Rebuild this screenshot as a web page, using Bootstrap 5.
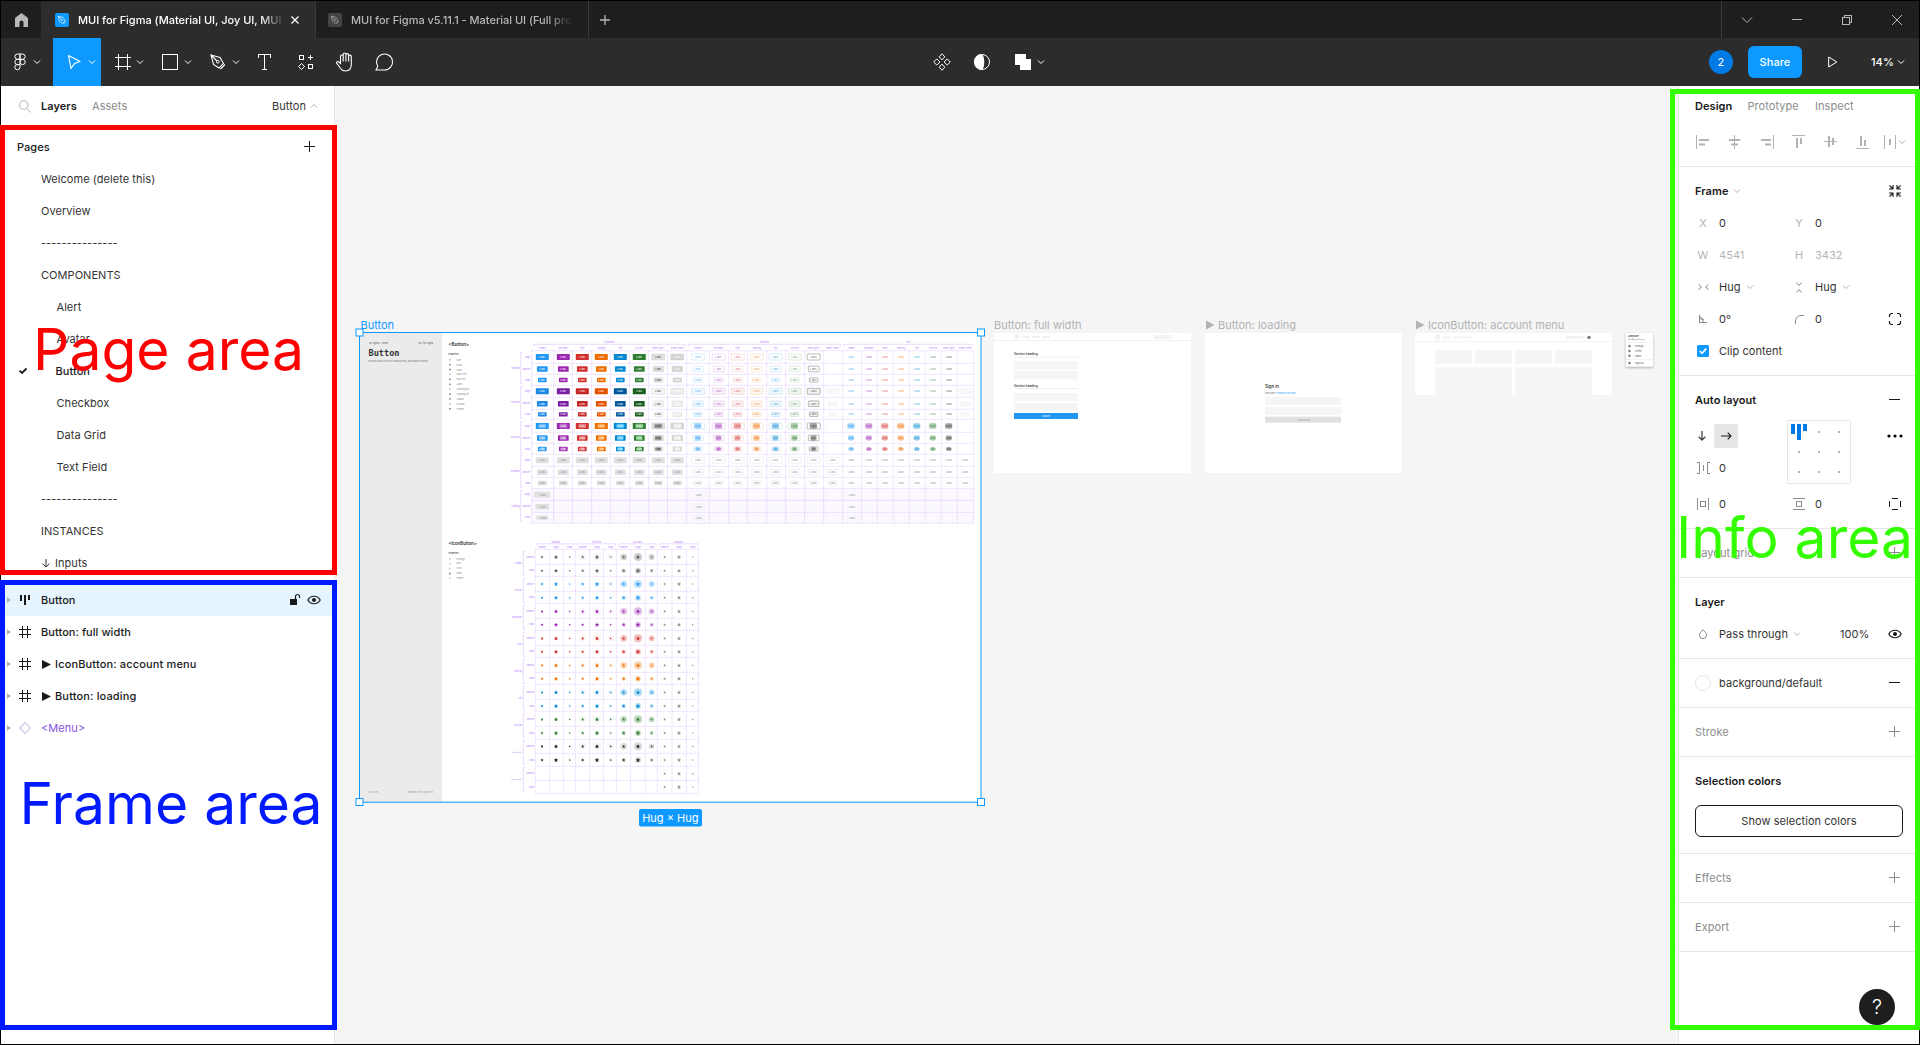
<!DOCTYPE html>
<html lang="en">
<head>
<meta charset="utf-8">
<title>MUI for Figma</title>
<link href="https://cdn.jsdelivr.net/npm/bootstrap@5.3.0/dist/css/bootstrap.min.css" rel="stylesheet">
<style>
  body { font-family: Inter, "Liberation Sans", sans-serif; font-size: 11px; line-height: 16px; letter-spacing: .055px; color: #333; width: 1920px; height: 1045px; overflow: hidden; background: #000; }
  svg { display: block; flex: none; overflow: visible; }
  .app { width: 1920px; height: 1045px; border: 1px solid #000; }
  .ln { fill: none; stroke: currentColor; }
  .crisp { shape-rendering: crispEdges; }
  .titlebar { height: 37px; background: #1e1e1e; color: #b8b8b8; }
  .titlebar .home { width: 40px; }
  .wtab { width: 274px; padding-left: 13px; border-left: 1px solid #3a3a3a; font-weight: 500; letter-spacing: -.02px; }
  .wtab.on { background: #2c2c2c; color: #fff; border-color: #2c2c2c; }
  .wtab .ttl { width: 207px; margin-left: 9px; overflow: hidden; white-space: nowrap; -webkit-mask-image: linear-gradient(90deg,#000 88%,transparent); mask-image: linear-gradient(90deg,#000 88%,transparent); }
  .wtab.off { padding-left: 12px; border-right: 1px solid #3a3a3a; }
  .wtab.off .ttl { width: 222px; }
  .wbtns { width: 198px; border-left: 1px solid #3a3a3a; }
  .wbtns > div { width: 50px; flex: none; }
  .toolbar { height: 48px; background: #2c2c2c; color: #fff; }
  .tool { width: 48px; height: 48px; padding-left: 10px; }
  .tool.on { background: #0d99ff; padding-left: 9px; }
  .tool .chev { margin-left: 1px; }
  .tool.on .chev { margin-left: 2px; }
  .tool.first { width: 52px; padding-left: 7px; }
  .tool1 { width: 40px; height: 48px; }
  .share { width: 54px; height: 32px; background: #0d99ff; border-radius: 6px; font-weight: 500; }
  .who { width: 24px; height: 24px; background: #007be5; border-radius: 50%; }
  .left { width: 334px; border-right: 1px solid #e6e6e6; }
  .right { width: 241px; border-left: 1px solid #e6e6e6; }
  .paneltabs { height: 40px; }
  .dim { color: #8c8c8c; }
  .pale { color: #b3b3b3; }
  .ink { color: #1a1a1a; }
  .sb { font-weight: 600; color: #1a1a1a; }
  .line32 { height: 32px; display: flex; align-items: center; white-space: nowrap; }
  .pages { height: 449px; padding-top: 5px; }
  .pages .line32 { padding-left: 40px; }
  .pages .sub { padding-left: 55.5px; }
  .layers { padding-top: 9px; }
  .layers .line32 { padding-left: 2px; }
  .layers .sel { background: #e5f4ff; }
  .layers .nm { font-weight: 500; color: #1a1a1a; margin-left: 10px; }
  .sect { border-bottom: 1px solid #e6e6e6; padding: 8px 0 8px 8px; }
  .sect .hd { padding-left: 8px; padding-right: 8px; }
  .i32 { width: 32px; height: 32px; display: flex; align-items: center; justify-content: center; flex: none; color: #8c8c8c; }
  .i32.pale { color: #b3b3b3; }
  .i32.ink { color: #1a1a1a; }
  .v64 { width: 64px; flex: none; }
  .selbtn { height: 32px; margin: 8px 16px 8px 8px; border: 1px solid #1a1a1a; border-radius: 6px; }
  .dirbtn { width: 24px; height: 24px; background: #e5e5e5; border-radius: 2px; }
  .canvas { background: #f5f5f5; }
  .mark-box { position: absolute; border: 5px solid; pointer-events: none; }
  .mark-text { position: absolute; font-size: 57px; line-height: 70px; white-space: nowrap; letter-spacing: 0; }
  .help { position: absolute; left: 1859px; top: 989px; width: 36px; height: 36px; border-radius: 50%; background: #1e1e1e; color: #fff; font-size: 20px; font-weight: 300; }
</style>
<script src="https://cdn.jsdelivr.net/npm/bootstrap@5.3.0/dist/js/bootstrap.bundle.min.js"></script>
</head>
<body class="position-relative">
<svg width="0" height="0" class="position-absolute">
  <symbol id="chev" viewBox="0 0 8 8"><path class="ln" d="M1 2.5 4 5.5 7 2.5"/></symbol>
  <symbol id="plus" viewBox="0 0 12 12"><path class="ln crisp" d="M0 5.5H11M5.5 0V11"/></symbol>
  <symbol id="minus" viewBox="0 0 12 12"><path class="ln crisp" d="M0 5.5H11"/></symbol>
  <symbol id="pen" viewBox="0 0 16 16"><path class="ln" stroke-width="1.1" d="M1 1 10 3.5 13.5 9.5 9 14 3.5 10.5ZM1 1 7 7M10.5 15 15 10.5"/><circle cx="7.8" cy="7.8" r="1.4" class="ln"/></symbol>
  <symbol id="hash" viewBox="0 0 12 12"><path class="ln" d="M3.5 0V12M8.5 0V12M0 3.5H12M0 8.5H12"/></symbol>
  <symbol id="eye" viewBox="0 0 14 10"><path class="ln" stroke-width="1.2" d="M.8 5C3.5 0 10.500 0 13.200 5 10.500 10 3.500 10 .8 5Z"/><circle cx="7" cy="5" r="2" fill="currentColor"/></symbol>
  <symbol id="tri" viewBox="0 0 4 6"><path fill="#b3b3b3" d="M0 0 4 3 0 6Z"/></symbol>
</svg>

<div class="app d-flex flex-column">
  <div class="titlebar d-flex align-items-stretch">
    <div class="home d-flex align-items-center justify-content-center"><svg width="13" height="14"><path fill="#b8b8b8" d="M6.500 0 13 5V14H8.500V9.500A2 2 0 0 0 4.500 9.500V14H0V5Z"/></svg></div>
    <div class="wtab on d-flex align-items-center">
      <svg width="14" height="14"><rect width="14" height="14" rx="2" fill="#0d99ff"/><use href="#pen" x="2.500" y="2.500" width="9" height="9"/></svg>
      <div class="ttl">MUI for Figma (Material UI, Joy UI, MUI X)</div>
      <svg width="8" height="8" style="margin-left:6px"><path class="ln" stroke-width="1.3" d="M.5.5 7.500 7.500M7.500.5.5 7.500"/></svg>
    </div>
    <div class="wtab off d-flex align-items-center">
      <svg width="14" height="14"><rect width="14" height="14" rx="2" fill="#444"/><use href="#pen" x="2.500" y="2.500" width="9" height="9"/></svg>
      <div class="ttl">MUI for Figma v5.11.1 - Material UI (Full preview)</div>
    </div>
    <div class="d-flex align-items-center" style="padding-left:11px"><svg width="10" height="10"><path class="ln" stroke-width="1.300" d="M5 0V10M0 5H10"/></svg></div>
    <div class="wbtns ms-auto d-flex align-items-center">
      <div class="d-flex justify-content-center"><svg width="10" height="6"><path class="ln" d="M0 .5 5 5.500 10 .5"/></svg></div>
      <div class="d-flex justify-content-center"><svg width="10" height="1"><path class="ln crisp" d="M0 .5H10"/></svg></div>
      <div class="d-flex justify-content-center"><svg width="10" height="10"><path class="ln crisp" d="M.5 2.500H7.500V9.500H.5ZM2.500 2.500V.5H9.500V7.500H7.500"/></svg></div>
      <div class="d-flex justify-content-center"><svg width="10" height="10"><path class="ln" d="M0 0 10 10M10 0 0 10"/></svg></div>
    </div>
  </div>

  <div class="toolbar d-flex align-items-center">
    <div class="tool first d-flex align-items-center"><svg width="24" height="24"><path class="ln" d="M12 4H9.500A2.500 2.500 0 0 0 9.500 9.300H12ZM12 4H14.500A2.500 2.500 0 0 1 14.500 9.300H12ZM12 9.300H9.500A2.500 2.500 0 0 0 9.500 14.600H12ZM12 14.600H9.500A2.600 2.600 0 1 0 12 17.200Z"/><circle class="ln" cx="14.600" cy="12" r="2.600"/></svg><svg class="chev" width="8" height="8"><use href="#chev"/></svg></div>
    <div class="tool on d-flex align-items-center"><svg width="24" height="24"><path class="ln" stroke-width="1.200" stroke-linejoin="round" d="M6.500 5.500 18 11.500 12.500 13.500 9 18.500Z"/></svg><svg class="chev" width="8" height="8"><use href="#chev"/></svg></div>
    <div class="tool d-flex align-items-center"><svg width="24" height="24"><path class="ln crisp" d="M7.500 4V20M16.500 4V20M4 7.500H20M4 16.500H20"/></svg><svg class="chev" width="8" height="8"><use href="#chev"/></svg></div>
    <div class="tool d-flex align-items-center"><svg width="24" height="24"><rect class="ln crisp" x="3.500" y="4.500" width="15" height="15"/></svg><svg class="chev" width="8" height="8"><use href="#chev"/></svg></div>
    <div class="tool d-flex align-items-center"><svg width="24" height="24"><use href="#pen" x="3" y="4" width="16" height="16"/></svg><svg class="chev" width="8" height="8"><use href="#chev"/></svg></div>
    <div class="tool1 d-flex align-items-center justify-content-center"><svg width="24" height="24"><path class="ln crisp" d="M5.500 8V4.500H17.500V8M11.500 4.500V19.500M9 19.500H14"/></svg></div>
    <div class="tool1 d-flex align-items-center justify-content-center"><svg width="24" height="24"><path class="ln crisp" d="M6.500 5.500H10.500V9.500H6.500ZM15.500 14.500H19.500V18.500H15.500ZM17.500 5V10M15 7.500H20"/><path class="ln" d="M8.500 13.500 11.500 16.500 8.500 19.500 5.500 16.500Z"/></svg></div>
    <div class="tool1 d-flex align-items-center justify-content-center"><svg width="24" height="24"><path class="ln" stroke-width="1.100" d="M7.500 13.500V6.300A1.300 1.300 0 0 1 10.200 6.300V11.500V4.300A1.300 1.300 0 0 1 12.900 4.300V11.500V5A1.300 1.300 0 0 1 15.600 5V11.500V6.500A1.300 1.300 0 0 1 18.300 6.500V14C18.300 19 15.500 21 12.500 21 9.500 21 8 19.500 6.500 17L3.700 13.200C3 12 4.800 10.800 6 12Z"/></svg></div>
    <div class="tool1 d-flex align-items-center justify-content-center"><svg width="24" height="24"><path class="ln" stroke-width="1.100" d="M3 20 4.800 16.300A8 8 0 1 1 11.500 20Z"/></svg></div>

    <div class="d-flex align-items-center" style="margin-left:528px">
      <svg width="18" height="18"><path class="ln" d="M9 .7 11.800 3.800 9 6.900 6.200 3.800ZM9 11.100 11.800 14.200 9 17.300 6.200 14.200ZM3.800 5.900 6.900 9 3.800 12.100 .7 9ZM14.200 5.900 17.300 9 14.200 12.100 11.100 9Z"/></svg>
      <svg width="16" height="16" style="margin-left:23px"><circle class="ln" cx="8" cy="8" r="7.500"/><path fill="#fff" d="M8 0A8 8 0 0 0 8 16C11 13 11 3 8 0Z"/></svg>
      <svg width="16" height="16" style="margin-left:25px"><path fill="#fff" d="M0 0H11V5H16V16H5V11H0Z"/></svg>
      <svg width="8" height="8" style="margin-left:6px"><use href="#chev"/></svg>
    </div>
    <div class="d-flex align-items-center ms-auto" style="padding-right:14px">
      <div class="who d-flex align-items-center justify-content-center">2</div>
      <div class="share d-flex align-items-center justify-content-center" style="margin-left:15px">Share</div>
      <svg width="10" height="12" style="margin-left:26px"><path class="ln" d="M.7 1 8.800 6 .7 11Z"/></svg>
      <span style="margin-left:33px;width:22px;font-weight:500">14%</span>
      <svg width="8" height="8" class="ms-1"><use href="#chev"/></svg>
    </div>
  </div>

  <div class="d-flex flex-fill">
    <div class="left bg-white d-flex flex-column">
      <div class="paneltabs d-flex align-items-center">
        <svg width="12" height="13" style="margin-left:18px"><circle class="ln pale" cx="4.800" cy="5" r="4.300"/><path class="ln pale" d="M7.800 8.300 11.500 12.500"/></svg>
        <span class="sb" style="margin-left:10px;width:51px">Layers</span><span class="dim">Assets</span>
        <span class="ms-auto">Button</span><svg width="8" height="8" class="pale" style="margin:0 16px 0 4px;transform:scaleY(-1)"><use href="#chev"/></svg>
      </div>
      <div class="pages overflow-hidden">
        <div class="line32 justify-content-between" style="padding:0 18px 0 16px"><span class="ink" style="font-weight:500">Pages</span><svg width="12" height="12" class="ink"><use href="#plus"/></svg></div>
        <div class="line32">Welcome (delete this)</div>
        <div class="line32">Overview</div>
        <div class="line32">---------------</div>
        <div class="line32">COMPONENTS</div>
        <div class="line32 sub">Alert</div>
        <div class="line32 sub">Avatar</div>
        <div class="line32 ink" style="padding-left:18px"><svg width="8" height="6"><path class="ln" stroke-width="1.800" d="M.5 2.700 3 5 7.500.5"/></svg><span style="margin-left:28.500px;font-weight:500">Button</span></div>
        <div class="line32 sub">Checkbox</div>
        <div class="line32 sub">Data Grid</div>
        <div class="line32 sub">Text Field</div>
        <div class="line32">---------------</div>
        <div class="line32">INSTANCES</div>
        <div class="line32"><svg width="10" height="9" class="me-1"><path class="ln" d="M5 0V8M1.500 4.500 5 8 8.500 4.500"/></svg>Inputs</div>
      </div>
      <div class="layers" id="layers">
        <div class="line32 sel"><svg width="4" height="6" class="ms-1"><use href="#tri"/></svg><svg width="12" height="12" class="ink" style="margin-left:8px"><path fill="currentColor" d="M1 1H3V7H1ZM5 1H7V11H5ZM9 1H11V6H9Z"/></svg><span class="nm">Button</span>
          <svg width="12" height="12" class="ink ms-auto"><rect x="1" y="5" width="7" height="6" fill="currentColor"/><path class="ln" stroke-width="1.200" d="M6.500 5V2.500A2 2 0 0 1 10.500 2.500V4"/></svg>
          <svg width="14" height="10" class="ink" style="margin:0 13px 0 6px"><use href="#eye"/></svg></div>
        <div class="line32"><svg width="4" height="6" class="ms-1"><use href="#tri"/></svg><svg width="12" height="12" class="ink" style="margin-left:8px"><use href="#hash"/></svg><span class="nm">Button: full width</span></div>
        <div class="line32"><svg width="4" height="6" class="ms-1"><use href="#tri"/></svg><svg width="12" height="12" class="ink" style="margin-left:8px"><use href="#hash"/></svg><svg width="9" height="9" class="ink" style="margin-left:11px"><path fill="currentColor" d="M0 0 9 4.500 0 9Z"/></svg><span class="nm" style="margin-left:4px;letter-spacing:.15px">IconButton: account menu</span></div>
        <div class="line32"><svg width="4" height="6" class="ms-1"><use href="#tri"/></svg><svg width="12" height="12" class="ink" style="margin-left:8px"><use href="#hash"/></svg><svg width="9" height="9" class="ink" style="margin-left:11px"><path fill="currentColor" d="M0 0 9 4.500 0 9Z"/></svg><span class="nm" style="margin-left:4px;letter-spacing:.15px">Button: loading</span></div>
        <div class="line32"><svg width="4" height="6" class="ms-1"><use href="#tri"/></svg><svg width="12" height="12" style="margin-left:8px;color:#d6c8ea"><path class="ln" stroke-width="1.300" d="M6 .7 11.300 6 6 11.300 .7 6Z"/></svg><span class="nm" style="color:#8653e0;font-weight:400">&lt;Menu&gt;</span></div>
      </div>
    </div>

    <div class="canvas flex-fill"><svg id="board" width="1343" height="958" viewBox="335 86 1343 958"></svg></div>

    <div class="right bg-white">
      <div class="paneltabs d-flex align-items-center" style="padding-left:16px"><span class="sb" style="width:52.500px">Design</span><span class="dim" style="width:67.500px">Prototype</span><span class="dim">Inspect</span></div>
      <div class="sect d-flex pt-0">
        <div class="i32 pale"><svg width="14" height="14"><path class="ln crisp" d="M.5 0V14"/><path fill="currentColor" d="M3 4H13V6H3ZM3 8.500H9V10.500H3Z"/></svg></div>
        <div class="i32 pale"><svg width="14" height="14"><path class="ln crisp" d="M6.500 0V14"/><path fill="currentColor" d="M1 4H12V6H1ZM3 8.500H10V10.500H3Z"/></svg></div>
        <div class="i32 pale"><svg width="14" height="14"><path class="ln crisp" d="M13.500 0V14"/><path fill="currentColor" d="M1 4H11V6H1ZM5 8.500H11V10.500H5Z"/></svg></div>
        <div class="i32 pale"><svg width="14" height="14"><path class="ln crisp" d="M0 .5H13"/><path fill="currentColor" d="M4 3H6V13H4ZM8 3H10V9H8Z"/></svg></div>
        <div class="i32 pale"><svg width="14" height="14"><path class="ln crisp" d="M0 6.500H13"/><path fill="currentColor" d="M4 1H6V12H4ZM8 3H10V10H8Z"/></svg></div>
        <div class="i32 pale"><svg width="14" height="14"><path class="ln crisp" d="M0 13.500H13"/><path fill="currentColor" d="M4 1H6V11H4ZM8 5H10V11H8Z"/></svg></div>
        <div class="i32 pale"><svg width="14" height="14"><path class="ln crisp" d="M.5 0V14M11.500 0V14"/><path fill="currentColor" d="M5 4H7V10H5Z"/></svg><svg width="8" height="8"><use href="#chev"/></svg></div>
      </div>
      <div class="sect">
        <div class="line32 ps-2"><span class="sb">Frame</span><svg width="8" height="8" class="pale" style="margin-left:5px"><use href="#chev"/></svg><div class="i32 ink ms-auto me-2"><svg width="12" height="12"><path class="ln" stroke-width="1.100" d="M.5.5 3.500 3.500M4 0V4H0M11.500.5 8.500 3.500M8 0V4H12M.5 11.500 3.500 8.500M0 8H4V12M11.500 11.500 8.500 8.500M12 8H8V12"/></svg></div></div>
        <div class="line32"><div class="i32 pale">X</div><div class="v64">0</div><div class="i32 pale">Y</div><div class="v64">0</div></div>
        <div class="line32"><div class="i32 pale">W</div><div class="v64 pale">4541</div><div class="i32 pale">H</div><div class="v64 pale">3432</div></div>
        <div class="line32"><div class="i32"><svg width="11" height="6"><path class="ln" d="M.5.5 3.500 3 .5 5.500M10.500.5 7.500 3 10.500 5.500"/></svg></div><div class="v64 d-flex align-items-center">Hug<svg width="8" height="8" class="pale" style="margin-left:5px"><use href="#chev"/></svg></div><div class="i32"><svg width="6" height="11"><path class="ln" d="M.5.5 3 3.500 5.500.5M.5 10.500 3 7.500 5.500 10.500"/></svg></div><div class="v64 d-flex align-items-center">Hug<svg width="8" height="8" class="pale" style="margin-left:5px"><use href="#chev"/></svg></div></div>
        <div class="line32"><div class="i32"><svg width="8" height="8"><path class="ln" d="M.5 0V7.500H8M.5 3.500A4 4 0 0 1 4.500 7.500M.5 1.500 5 5"/></svg></div><div class="v64">0°</div><div class="i32"><svg width="9" height="9"><path class="ln" d="M.5 9V6A5.500 5.500 0 0 1 6 .5H9"/></svg></div><div class="v64">0</div><div class="i32 ink"><svg width="12" height="12"><path class="ln" stroke-width="1.200" d="M.5 4V2.500A2 2 0 0 1 2.500.5H4M8 .5H9.500A2 2 0 0 1 11.500 2.500V4M11.500 8V9.500A2 2 0 0 1 9.500 11.500H8M4 11.500H2.500A2 2 0 0 1 .5 9.500V8"/></svg></div></div>
        <div class="line32"><div class="i32"><svg width="12" height="12"><rect width="12" height="12" rx="1.500" fill="#0d99ff"/><path fill="none" stroke="#fff" stroke-width="1.700" d="M2.700 6 5 8.300 9.300 3.700"/></svg></div>Clip content</div>
      </div>
      <div class="sect">
        <div class="line32 hd"><span class="sb">Auto layout</span><div class="i32 ink ms-auto"><svg width="12" height="12"><use href="#minus"/></svg></div></div>
        <div class="d-flex" style="padding-top:4px">
          <div style="width:100px">
            <div class="line32"><div class="d-flex justify-content-center" style="width:27px;padding-left:2px"><svg width="8" height="10"><path fill="none" stroke="#444" stroke-width="1.300" d="M4 0V9M.7 5.700 4 9 7.300 5.700"/></svg></div><div class="dirbtn ink d-flex align-items-center justify-content-center"><svg width="11" height="8"><path class="ln" stroke-width="1.100" d="M0 4H10M6.700.7 10 4 6.700 7.300"/></svg></div></div>
            <div class="line32"><div class="i32"><svg width="13" height="12"><path class="ln crisp" d="M0 .5H2.500V11.500H0M13 .5H10.500V11.500H13M6.500 3V9"/></svg></div>0</div>
          </div>
          <svg width="64" height="64"><rect x=".5" y=".5" width="63" height="63" rx="1" fill="#fff" stroke="#e5e5e5"/><path fill="#007be5" d="M4 4H8V14H4ZM10 4H14V20H10ZM16 4H20V11H16Z"/><path fill="#b3b3b3" d="M31 11h2v2h-2zM51 11h2v2h-2zM11 31h2v2h-2zM31 31h2v2h-2zM51 31h2v2h-2zM11 51h2v2h-2zM31 51h2v2h-2zM51 51h2v2h-2z"/></svg>
          <div class="i32 ink ms-auto me-2"><svg width="16" height="4"><circle cx="2" cy="2" r="1.600"/><circle cx="8" cy="2" r="1.600"/><circle cx="14" cy="2" r="1.600"/></svg></div>
        </div>
        <div class="line32" style="margin-top:4px"><div class="i32"><svg width="12" height="12"><path class="ln crisp" d="M.5 0V12M11.500 0V12M3.500 3.500H8.500V8.500H3.500Z"/></svg></div><div class="v64">0</div><div class="i32"><svg width="12" height="12"><path class="ln crisp" d="M0 .5H12M0 11.500H12M3.500 3.500H8.500V8.500H3.500Z"/></svg></div><div class="v64">0</div><div class="i32 ink"><svg width="12" height="12"><path class="ln crisp" d="M3 .5H9M3 11.500H9M.5 3V9M11.500 3V9"/></svg></div></div>
      </div>
      <div class="sect"><div class="line32 hd dim">Layout grid<div class="i32 ms-auto"><svg width="12" height="12"><use href="#plus"/></svg></div></div></div>
      <div class="sect">
        <div class="line32 hd sb">Layer</div>
        <div class="line32"><div class="i32"><svg width="8" height="10"><path class="ln" d="M4 .7C5.500 2.500 7.500 4 7.500 6.200A3.500 3.500 0 0 1 .5 6.200C.5 4 2.500 2.500 4 .7Z"/></svg></div>Pass through<svg width="8" height="8" class="pale" style="margin-left:5px"><use href="#chev"/></svg><span class="ms-auto" style="margin-right:8px;width:34px">100%</span><div class="i32 ink" style="width:26px;margin-right:11px"><svg width="14" height="10"><use href="#eye"/></svg></div></div>
      </div>
      <div class="sect"><div class="line32 pe-2"><div class="i32"><svg width="16" height="16"><circle cx="8" cy="8" r="7.500" fill="#fff" stroke="#e5e5e5"/></svg></div>background/default<div class="i32 ink ms-auto"><svg width="12" height="12"><use href="#minus"/></svg></div></div></div>
      <div class="sect"><div class="line32 hd dim">Stroke<div class="i32 ms-auto"><svg width="12" height="12"><use href="#plus"/></svg></div></div></div>
      <div class="sect"><div class="line32 hd sb">Selection colors</div><div class="selbtn d-flex align-items-center justify-content-center">Show selection colors</div></div>
      <div class="sect"><div class="line32 hd dim">Effects<div class="i32 ms-auto"><svg width="12" height="12"><use href="#plus"/></svg></div></div></div>
      <div class="sect"><div class="line32 hd dim">Export<div class="i32 ms-auto"><svg width="12" height="12"><use href="#plus"/></svg></div></div></div>
    </div>
  </div>
</div>

<div class="help d-flex align-items-center justify-content-center">?</div>
<div class="mark-box" style="left:0;top:125px;width:337px;height:450px;color:#f00"></div>
<div class="mark-box" style="left:0;top:580px;width:337px;height:450px;color:#0019ff"></div>
<div class="mark-box" style="left:1670px;top:89px;width:250px;height:941px;color:#3f0"></div>
<div class="mark-text" style="left:33px;top:315px;color:#f00">Page area</div>
<div class="mark-text" style="left:19.500px;top:769px;color:#0019ff">Frame area</div>
<div class="mark-text" style="left:1676px;top:503px;color:#3f0">Info area</div>

<script>
// Draws the zoomed-out artboards of the file onto the canvas.
const out = [];
const R = (x, y, w, h, f, o = '') => out.push(`<rect x="${x}" y="${y}" width="${w}" height="${h}" fill="${f}" ${o}/>`);
const T = (x, y, s, size, f, o = '') => out.push(`<text x="${x}" y="${y}" font-size="${size}" fill="${f}" letter-spacing="0" ${o}>${s}</text>`);
const P = (d, c, o = '') => out.push(`<path d="${d}" fill="none" stroke="${c}" ${o}/>`);
const mid = 'text-anchor="middle"', end = 'text-anchor="end"';
const VI = '#b57bff', DASH = 'stroke-dasharray="1.4 .7" stroke-width=".8" opacity=".36"';

// Main artboard
R(360, 333, 621, 469, '#fff'); R(360, 333, 82, 469, '#ebebeb');
T(369, 344, '❖ Figma + Token', 2.3, '#555'); T(433, 344, 'MUI for Figma', 2.2, '#555', end);
T(368.500, 355.600, 'Button', 8.600, '#333', 'font-family="DejaVu Sans Mono" font-weight="700"');
T(368.500, 361.500, 'Buttons allow users to take actions, and make choices.', 2.350, '#777');
T(368.500, 793, 'MUI.com', 2.200, '#999'); T(433, 793, 'Material UI for Figma v5', 2.200, '#999', end);
T(448.500, 346, '&lt;Button&gt;', 4.600, '#333', 'font-weight="600"');
T(448.500, 354.500, 'Properties', 2, '#444', 'font-weight="600"');
['Size', 'Color', 'State', 'Start icon', 'End icon', 'Label', 'Loading text', 'Loading left', 'Variant', 'Custom', 'Theme'].forEach((s, i) => {
  R(449, 359 + i * 4.900, 2, 1.500, i % 3 ? '#999' : '#ccc'); T(456.500, 360.700 + i * 4.900, s, 2.200, '#888');
});

// Button matrix
const bx = [531.7,553.7,572.3,591.7,610.3,629.7,648.7,667.5,686.7,709.3,728.7,747.3,766.7,785.7,804.7,823.7,842.7,861.7,877.3,893.3,909.3,925.3,941.3,957.3,973.7];
const by = [350.7,363.3,374.3,385.3,397.3,409.3,419.3,432.3,443.3,454.3,466.3,477.3,488.3,500.3,512.3,523.3];
const cx = [542.3,563.3,582.3,601.3,620.3,639.3,658.3,677.3,698,718.7,737.7,756.7,775.7,794.7,813.7,832.7,851.3,869,885,901,917,933,949,965.3];
const cy = [357,369,380,391.3,403.7,414.3,426,438,449,460.3,472.3,483,494.7,506.7,517.7];
R(531.700, 488.300, 442, 35, '#fbf8ff');
const bv = x => `M${x} 350.700V523.300`, bh = y => `M531.700 ${y}H973.700`;
P(bx.map(bv).join('') + by.map(bh).join(''), VI, DASH);
const main = ['#2196f3','#9c27b0','#d32f2f','#ef6c00','#0288d1','#2e7d32','#e0e0e0','#d5d5d5'];
const dark = ['#1e88e5','#7b1fa2','#c62828','#e65100','#01579b','#1b5e20','#f5f5f5','#eeeeee'];
const soft = ['#64b5f6','#ba68c8','#e57373','#ffa040','#4fc3f7','#81c784','#9e9e9e','#eeeeee'];
const outl = ['#2196f3','#9c27b0','#d32f2f','#ef6c00','#0288d1','#2e7d32','#222','#fff'];
const sz = [[13,6],[10.7,5.6],[8.7,4.300]];
const names = ['Primary','Secondary','Error','Warning','Info','Success','Inherit (grey)','Inherit (white)'];
cx.forEach((x, c) => {
  const g = c >> 3, k = c % 8;
  T(x, 349.200, names[k], 2, VI, mid);
  cy.forEach((y, r) => {
    const st = Math.floor(r / 3); let [w, h] = sz[r % 3];
    const box = (f, o = '') => R(x - w / 2, y - h / 2, w, h, f, 'rx=".6" ' + o);
    const lab = (f, s = 'LABEL', o = '') => T(x, y + .8, s, 2.100, f, mid + ' font-weight="500" ' + o);
    if (st === 4) {
      if (k) return;
      w += 3; if (g === 0) box('#e0e0e0'); else if (g === 1) box('none', 'stroke="#e4e4e4" stroke-width=".4"');
      lab('#999', '◌ LABEL'); return;
    }
    if (st === 3) { if (g === 0) box('#e0e0e0'); else if (g === 1) box('none', 'stroke="#ddd" stroke-width=".4"'); lab('#999'); return; }
    if (g === 0) {
      box(st === 1 ? dark[k] : main[k], k > 5 ? 'stroke="#ccc" stroke-width=".4"' : '');
      if (st === 2) R(x - w * .3, y - h * .38, w * .6, h * .76, soft[k], 'rx="1"');
      lab(k === 6 ? '#333' : '#fff', 'LABEL', 'opacity=".85"'); return;
    }
    if (k === 7) { if (st === 1) box('#f7f7f7'); return; }
    if (g === 1) R(x - w / 2, y - h / 2, w, h, st === 1 ? outl[k] : '#fff', `rx=".6" fill-opacity=".06" stroke="${outl[k]}" stroke-opacity="${k === 6 ? .6 : .3}" stroke-width=".5"`);
    if (st === 2) R(x - w * .3, y - h * .45, w * .55, h * .9, outl[k], 'rx="1.400" opacity=".42"');
    lab(outl[k], 'LABEL', 'opacity=".65"');
  });
});
[[533.7,685,'Contained'],[688.3,840.7,'Outlined'],[843.7,972.7,'Text']].forEach(([a, b, s]) => { P(`M${a} 346.300V344.300H${b}V346.300`, VI, 'stroke-width=".5" opacity=".55"'); T((a + b) / 2, 343.400, s, 2.200, VI, mid); });
[[352.3,383.7,'Enabled'],[386.3,418.3,'Hovered'],[421.3,453.3,'Focused'],[455.3,487.3,'Disabled'],[490.3,521.7,'Loading']].forEach(([a, b, s]) => { P(`M522.500 ${a}H520.700V${b}H522.500`, VI, 'stroke-width=".5" opacity=".55"'); T(519.500, (a + b) / 2 + .7, s, 2.200, VI, end); });
cy.forEach((y, r) => T(530, y + .7, ['Large','Medium','Small'][r % 3], 2, VI, end));

// IconButton matrix
T(448.500, 545, '&lt;IconButton&gt;', 4.300, '#333', 'font-weight="600"');
T(448.500, 553.700, 'Properties', 2, '#444', 'font-weight="600"');
['Settings','Size','Color','State','Theme'].forEach((s, i) => { R(449, 558 + i * 4.900, 1.600, 1.600, i === 3 ? '#777' : '#ccc'); T(456.300, 559.500 + i * 4.900, s, 2.200, '#888'); });
const ix = [316,359,400,436,479,520,559,602,646,682,726,769,806].map(v => 430 + v / 3);
const iy = [58,103,139,184,220,265,301,346,382,427,463,508,544,589,628,670,709,751,790].map(v => 530 + v / 3);
P(ix.map(x => `M${x} ${iy[0]}V${iy[18]}`).join('') + iy.map(y => `M${ix[0]} ${y}H${ix[12]}`).join(''), VI, DASH);
const jx = [336,378,419,458,501,542,581,624,665,704,747,788].map(v => 430 + v / 3);
const jy = [81,122,162,203,244,284,325,365,406,446,487,528,568,609,649,690,731,771].map(v => 530 + v / 3);
const ic = ['#616161','#2196f3','#9c27b0','#d32f2f','#ef6c00','#0288d1','#2e7d32','#212121','#999'];
const star = (x, y, s, f) => out.push(`<path transform="translate(${x} ${y}) scale(${s})" fill="${f}" d="M0-1 .35-.35 1-.3 .5.2 .7 1 0 .6-.7 1-.5.2-1-.3-.35-.35Z"/>`);
jy.forEach((y, r) => {
  const k = r >> 1;
  jx.forEach((x, c) => {
    const g = Math.floor(c / 3), s = [1.400, 2, 1][c % 3];
    if (k === 8 && g < 3) return;
    const rad = (r % 2 ? [2.200, 2.900, 1.900] : [3.300, 4.100, 2.900])[c % 3];
    if (g === 2) out.push(`<circle cx="${x}" cy="${y}" r="${rad}" fill="${ic[k]}" opacity="${k === 7 ? .16 : .3}"/>`);
    if (g === 1) out.push(`<circle cx="${x}" cy="${y}" r="${rad}" fill="${ic[k]}" opacity=".05"/>`);
    star(x, y, s, g === 3 ? '#999' : ic[k]);
  });
  T(534, y + .7, r % 2 ? 'Small' : 'Medium', 2, VI, end);
});
jx.forEach((x, c) => T(x, 547.700, ['Medium','Large','Small'][c % 3], 2, VI, mid));
[[320,434,'Enabled'],[443,557,'Hovered'],[566,679,'Focused'],[689,803,'Disabled']].forEach(([a, b, s]) => { a = 430 + a / 3; b = 430 + b / 3; P(`M${a} 545.700V543.800H${b}V545.700`, VI, 'stroke-width=".5" opacity=".55"'); T((a + b) / 2, 542.500, s, 2.200, VI, mid); });
['Default','Primary','Secondary','Error','Warning','Info','Success','Inherit (black)','Inherit (white)'].forEach((s, i) => { const m = 563.300 + i * 27; P(`M525.500 ${m - 12}H523.300V${m + 12}H525.500`, VI, 'stroke-width=".5" opacity=".55"'); T(522.300, m + .7, s, i > 6 ? 1.700 : 2.100, VI, end); });

// Full-width artboard
R(994, 333, 197, 140, '#fff'); P('M994 340.500H1191', '#f2f2f2');
out.push('<circle cx="1016.700" cy="336.700" r="2.700" fill="#f3f3f3"/>');
[1022, 1032, 1042].forEach(x => R(x, 336, 8, 1.800, '#f1f1f1')); R(1154, 335, 17.500, 4, '#f3f3f3');
[[355.200, 357.300], [387, 388.500]].forEach(([t, l]) => { T(1014, t, 'Section heading', 3.050, '#222', 'font-weight="500"'); P(`M1014 ${l}H1077.700`, '#e8e8e8', 'stroke-width=".7"'); });
[361.300, 371.300, 393, 403].forEach(y => R(1014, y, 63.700, 8, '#f5f5f5'));
R(1014, 413, 64, 6, '#2196f3'); T(1046, 416.800, 'SUBMIT', 2.200, '#fff', mid);

// Loading artboard
R(1205, 333, 196.700, 140, '#fff'); T(1265, 388, 'Sign in', 4.300, '#222', 'font-weight="500"');
T(1265, 394, 'New user? <tspan fill="#2196f3">Create an account</tspan>', 2.200, '#666');
R(1265, 397, 76, 8, '#f5f5f5'); R(1265, 407, 76, 8, '#f5f5f5'); R(1265, 416.700, 76, 6, '#e0e0e0'); T(1303, 420.500, '◌ SIGNING IN', 2.200, '#999', mid);

// Account menu artboard
R(1415, 333, 197, 62, '#fff'); P('M1415 341.500H1612', '#f2f2f2');
out.push('<circle cx="1437.500" cy="337.300" r="2.700" fill="#f3f3f3"/><circle cx="1589" cy="337.400" r="1.700" fill="#777"/>');
[1442, 1452.500, 1462.500].forEach(x => R(x, 336.300, 8.500, 2, '#f1f1f1')); R(1566, 336, 17.500, 2.700, '#f1f1f1');
[1435, 1475, 1515, 1555].forEach(x => R(x, 350.500, 37, 13.500, '#f5f5f5')); R(1435, 367.300, 77, 28, '#f5f5f5'); R(1515, 367.300, 77.300, 28, '#f5f5f5');
R(1625.700, 333, 27.400, 33.700, '#fff', 'rx=".8" style="filter:drop-shadow(0 1px 1px rgba(0,0,0,.3))"');
T(1628, 336.800, 'John Doe', 2.300, '#222', 'font-weight="600"'); T(1628, 340, 'john@example.com', 1.800, '#777');
P('M1626 342.500H1653M1626 359.500H1653', '#ddd', 'stroke-width=".4"');
['Settings', 'Profile', 'Wallet', 'Sign out'].forEach((s, i) => { const y = [346, 351, 355.700, 363][i]; out.push(`<circle cx="1629.500" cy="${y}" r="1.200" fill="#777"/>`); T(1635, y + .8, s, 2.200, '#555'); });

// Artboard titles
T(360.500, 329, 'Button', 11, '#0d99ff'); T(994, 329, 'Button: full width', 11, '#b3b3b3');
out.push('<path fill="#b3b3b3" d="M1206 320.500 1214.500 325 1206 329.500ZM1416 320.500 1424.500 325 1416 329.500Z"/>');
T(1218, 329, 'Button: loading', 11, '#b3b3b3'); T(1428, 329, 'IconButton: account menu', 11, '#b3b3b3');

// Selection outline, handles and size badge
R(359.500, 332.500, 621.500, 469.700, 'none', 'stroke="#0d99ff"');
[[359.500, 332.500], [981, 332.500], [359.500, 802], [981, 802]].forEach(([x, y]) => R(x - 3.500, y - 3.500, 7, 7, '#fff', 'stroke="#0d99ff"'));
R(639, 809, 63, 17.500, '#0d99ff', 'rx="2"'); T(670.300, 821.700, 'Hug × Hug', 11, '#fff', mid);
document.getElementById('board').innerHTML = out.join('');
</script>
</body>
</html>
